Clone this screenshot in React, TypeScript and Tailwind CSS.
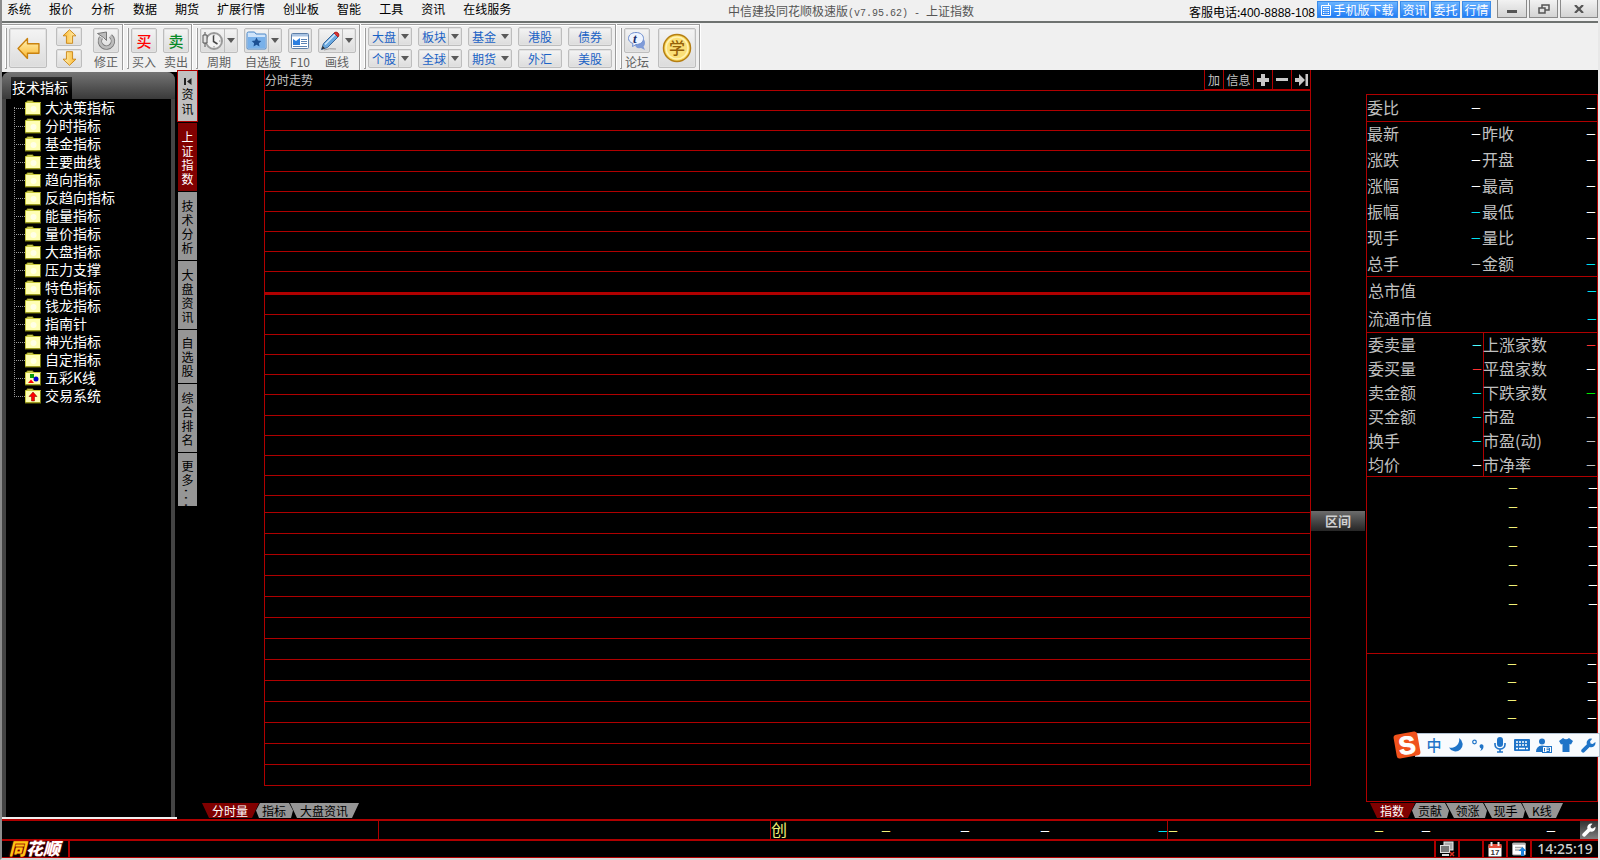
import React from 'react';
import clsx from 'clsx';

const menus = ['系统', '报价', '分析', '数据', '期货', '扩展行情', '创业板', '智能', '工具', '资讯', '在线服务'];

const indicators = [
  '大决策指标', '分时指标', '基金指标', '主要曲线', '趋向指标', '反趋向指标', '能量指标', '量价指标', '大盘指标',
  '压力支撑', '特色指标', '钱龙指标', '指南针', '神光指标', '自定指标', '五彩K线', '交易系统',
];

const sideTabs = ['上证指数', '技术分析', '大盘资讯', '自选股', '综合排名'];

const quotes = [
  ['最新', 'text-white', '昨收', 'text-white'],
  ['涨跌', 'text-white', '开盘', 'text-white'],
  ['涨幅', 'text-white', '最高', 'text-white'],
  ['振幅', 'text-[#00e0f0]', '最低', 'text-white'],
  ['现手', 'text-[#00e0f0]', '量比', 'text-white'],
  ['总手', 'text-[#c0c0c0]', '金额', 'text-[#00e0f0]'],
];

const stats = [
  ['委卖量', 'text-[#50ffff]', '上涨家数', 'text-[#ff3232]'],
  ['委买量', 'text-[#ff3232]', '平盘家数', 'text-white'],
  ['卖金额', 'text-[#00e0f0]', '下跌家数', 'text-[#00e600]'],
  ['买金额', 'text-[#00e0f0]', '市盈', 'text-[#c0c0c0]'],
  ['换手', 'text-[#00e0f0]', '市盈(动)', 'text-[#c0c0c0]'],
  ['均价', 'text-white', '市净率', 'text-[#c0c0c0]'],
];

const face = 'border border-[#bdbdbd] rounded-[2px] bg-gradient-to-b from-[#f4f4f4] to-[#dcdcdc] shadow-[inset_0_0_0_1px_#e2e2e2]';

const Dash = ({ className = '' }: { className?: string }) => (
  <span className={clsx("font-['Liberation_Sans'] text-[15px] leading-[16px] text-right", className)}>–</span>
);

const Caret = () => (
  <svg width="8" height="5" viewBox="0 0 8 5" fill="#5a5a5a"><path d="M0 0h8L4 5z" /></svg>
);

/* ---------- toolbar ---------- */

const Group = ({ children, className = 'pr-[2px]' }: { children: React.ReactNode; className?: string }) => (
  <div className={clsx('flex border-t border-r border-[#9c9c9c] pl-[3px] pt-[3px] mr-px shadow-[inset_0_1px_0_#fff,1px_0_0_#fff]', className)}>
    <div className="w-[2px] h-[41px] mr-[2px] border-r border-b border-[#9c9c9c] bg-white" />
    {children}
  </div>
);

const Tool = ({ label, drop, narrow, children }: { label: string; drop?: boolean; narrow?: boolean; children: React.ReactNode }) => (
  <div className={clsx('flex flex-col items-center text-[#606060]', drop ? 'w-[38px]' : narrow ? 'w-[24px]' : 'w-[26px]')}>
    <div className={clsx('flex w-full h-[25px]', face)}>
      <button aria-label={label} className="flex-1 flex items-center justify-center">{children}</button>
      {drop && (
        <button aria-label={label} className="w-[13px] flex items-center justify-center border-l border-[#bdbdbd]"><Caret /></button>
      )}
    </div>
    <span className="mt-[2px] text-[12px] leading-[14px] whitespace-nowrap">{label}</span>
  </div>
);

const SmallTool = ({ label, drop, split }: { label: string; drop?: boolean; split?: boolean }) => (
  <button className={clsx('w-[44px] h-[19px] flex items-center text-[12px] leading-[16px] text-[#1a62c5]', face, drop ? 'pl-[3px]' : 'justify-center')}>
    {label}
    {drop && (
      <span className={clsx('flex-1 h-full flex items-center justify-center ml-[2px]', split && 'border-l border-[#bdbdbd]')}><Caret /></span>
    )}
  </button>
);

const Arrow = ({ className, size }: { className: string; size: number }) => (
  <svg width={size} height={size} viewBox="0 0 22 22" className={className}>
    <defs>
      <linearGradient id="gold" x1="0" y1="0" x2="0" y2="1">
        <stop offset="0" stopColor="#fff3b8" />
        <stop offset="1" stopColor="#fbb62c" />
      </linearGradient>
    </defs>
    <path d="M1 11L10 1.5v5h11v9H10v5z" fill="url(#gold)" stroke="#c9820f" strokeWidth="1.3" strokeLinejoin="round" />
  </svg>
);

const ClockIcon = () => (
  <svg width="21" height="20" viewBox="0 0 21 20">
    <circle cx="12" cy="10" r="8" fill="#f3f3f3" stroke="#9a9a9a" strokeWidth="2" />
    <path d="M12 3.500v1.500M12 15v1.500M17 10h1.500" stroke="#888" />
    <path d="M11.500 4.500v6l4 2.500" fill="none" stroke="#444" strokeWidth="1.500" />
    <path d="M3 1v3m0 8v4M1 4h4v8H1z" fill="#e4e4e4" stroke="#555" />
  </svg>
);

const FavIcon = () => (
  <svg width="21" height="19" viewBox="0 0 21 19">
    <path d="M1 2.500q0-1.500 1.500-1.500h6l1.500 2h9q1 0 1 1v13q0 1-1 1H2q-1 0-1-1z" fill="#cfe4fa" stroke="#4a86c6" />
    <path d="M2 6h17v11H2z" fill="#79b1ea" />
    <path d="M10.500 6.500l1.500 3 3.300.4-2.400 2.300.6 3.200-3-1.600-3 1.600.6-3.200L5.700 9.900 9 9.500z" fill="#1c4f93" />
  </svg>
);

const F10Icon = () => (
  <svg width="18" height="16" viewBox="0 0 18 16">
    <rect x=".5" y=".5" width="17" height="15" rx="1" fill="#fff" stroke="#5d7fa8" />
    <path d="M1 1h16v2.500H1z" fill="#a9c3e2" />
    <path d="M2 6l3 2 4-3v7H2z" fill="#2d7fe0" />
    <path d="M10 6.500h6M10 8.500h6M10 10.500h6M2 13.500h14" stroke="#5d84b5" />
  </svg>
);

const PencilIcon = () => (
  <svg width="21" height="20" viewBox="0 0 21 20">
    <path d="M4 19q5-2 12-1" stroke="#999" fill="none" />
    <path d="M1.500 18.500l2-6L14 2l4 4L7.500 16.500z" fill="#6aa9e0" stroke="#3a6799" />
    <path d="M14 2q2-2 4 0t0 4z" fill="#d33" stroke="#a22" />
    <path d="M5 13.500L15 3.500" stroke="#d2e8fb" strokeWidth="1.500" />
    <path d="M1.500 18.500l1.200-3.500 2.300 2.300z" fill="#333" />
  </svg>
);

const RedoIcon = () => (
  <svg width="20" height="20" viewBox="0 0 20 20">
    <path d="M5 6.500a6.500 6.500 0 1 0 9.500-1.500" fill="none" stroke="#777" strokeWidth="4.500" />
    <path d="M5 6.500a6.500 6.500 0 1 0 9.500-1.500" fill="none" stroke="#bcbcbc" strokeWidth="2.800" />
    <path d="M1.500 2.500L10.500 1v8.500l-3-3z" fill="#bcbcbc" stroke="#777" />
  </svg>
);

const Toolbar = () => (
  <div className="flex h-[47px] pt-px bg-[#f0f0f0] shrink-0">
    <Group className="pr-[3px]">
      <button aria-label="后退" className={clsx('w-[38px] h-[40px] flex items-center justify-center', face)}><Arrow className="" size={23} /></button>
      <div className="flex flex-col gap-[3px] ml-[9px] mr-[11px] -mt-px">
        <button aria-label="上移" className={clsx('w-[26px] h-[19px] flex items-center justify-center', face)}><Arrow className="rotate-90" size={15} /></button>
        <button aria-label="下移" className={clsx('w-[26px] h-[19px] flex items-center justify-center', face)}><Arrow className="-rotate-90" size={15} /></button>
      </div>
      <Tool label="修正"><RedoIcon /></Tool>
    </Group>
    <Group>
      <div className="flex gap-[6px]">
        <Tool label="买入"><span className="text-[15px] leading-[20px] font-medium text-[#ff0000]">买</span></Tool>
        <Tool label="卖出"><span className="text-[15px] leading-[20px] font-medium text-[#078a28]">卖</span></Tool>
      </div>
    </Group>
    <Group className="pr-[3px]">
      <div className="flex gap-[6px]">
        <Tool label="周期" drop><ClockIcon /></Tool>
        <Tool label="自选股" drop><FavIcon /></Tool>
        <Tool label="F10" narrow><F10Icon /></Tool>
        <Tool label="画线" drop><PencilIcon /></Tool>
      </div>
    </Group>
    <Group className="pr-[3px]">
      <div className="grid grid-cols-5 gap-x-[6px] gap-y-[3px] -mt-px content-start">
        <SmallTool label="大盘" drop split />
        <SmallTool label="板块" drop split />
        <SmallTool label="基金" drop />
        <SmallTool label="港股" />
        <SmallTool label="债券" />
        <SmallTool label="个股" drop split />
        <SmallTool label="全球" drop split />
        <SmallTool label="期货" drop />
        <SmallTool label="外汇" />
        <SmallTool label="美股" />
      </div>
    </Group>
    <Group className="pr-[3px]">
      <Tool label="论坛">
        <svg width="20" height="20" viewBox="0 0 20 20">
          <path d="M12 8q6-1 6 4 0 2-1.500 3.500L18 19l-4-2q-6 1-6-4z" fill="#7f9bd8" />
          <path d="M9 1.500c4.500 0 7.500 2.500 7.500 6s-3 6-7.500 6l-3.500 2 .5-3C3 11.500 1.500 9.500 1.500 7.500c0-3.500 3-6 7.500-6z" fill="#eef4ff" stroke="#6d8dcf" />
          <text x="6" y="12" fontSize="13" fontWeight="bold" fontStyle="italic" fontFamily="Liberation Serif" fill="#1b2f6b">t</text>
        </svg>
      </Tool>
      <button aria-label="学" className={clsx('ml-[8px] w-[38px] h-[40px] flex items-center justify-center', face)}>
        <svg width="30" height="30" viewBox="0 0 30 30">
          <circle cx="15" cy="15" r="13.500" fill="#f8d658" stroke="#b57f14" strokeWidth="1.500" />
          <circle cx="15" cy="15" r="11" fill="#fbe078" stroke="#fff3b4" strokeWidth="1.500" />
          <text x="15" y="21" textAnchor="middle" fontSize="16" fontWeight="500" fill="#94610a">学</text>
        </svg>
      </button>
    </Group>
  </div>
);

/* ---------- title bar ---------- */

const blueBtn = 'h-[17px] border border-[#3b8be8] bg-gradient-to-b from-[#6ab4ff] to-[#1f7cf5] text-white text-[12px] leading-[15px] flex items-center justify-center whitespace-nowrap';
const winBtn = 'h-[18px] border border-t-0 border-[#8a8a8a] bg-gradient-to-b from-[#f2f2f2] to-[#d4d4d4] flex items-center justify-center';

const TitleBar = () => (
  <header className="relative flex justify-between h-[23px] shrink-0 bg-[#f0f0f0] border-b-2 border-[#6e7270] text-[12px] leading-[18px] text-black">
    <nav className="flex gap-[18px] pl-[5px]">
      {menus.map((m) => <button key={m} className="h-[18px]">{m}</button>)}
    </nav>
    <div className="absolute left-[726px] top-[2px] text-[#555] whitespace-nowrap">
      中信建投同花顺极速版<span className="font-['Liberation_Mono'] text-[10px]">(v7.95.62) - </span>上证指数
    </div>
    <div className="flex items-start">
      <span className="pt-[3px] mr-[2px]">客服电话:<span className="font-['Liberation_Sans'] text-[12px]">400-8888-108</span></span>
      <div className="flex gap-[2px] pt-px">
        <button className={clsx('w-[81px]', blueBtn)}>
          <svg width="10" height="13" viewBox="0 0 10 13" className="mr-[2px]">
            <path d="M.5 2.500h9v10h-9zM7.500 0v2" fill="none" stroke="#fff" />
            <path d="M2 4.500h6M2 6.500h1.500m1 0h1m1 0H8M2 8.500h1.500m1 0h1m1 0H8M2 10.500h1.500m1 0h1m1 0H8" stroke="#fff" />
          </svg>
          手机版下载
        </button>
        <button className={clsx('w-[29px]', blueBtn)}>资讯</button>
        <button className={clsx('w-[29px]', blueBtn)}>委托</button>
        <button className={clsx('w-[29px]', blueBtn)}>行情</button>
      </div>
      <div className="flex gap-[2px] ml-[6px]">
        <button aria-label="最小化" className={clsx('w-[30px]', winBtn)}><svg width="10" height="8"><path d="M0 5h10v3H0z" fill="#555" /></svg></button>
        <button aria-label="还原" className={clsx('w-[29px]', winBtn)}>
          <svg width="12" height="10" viewBox="0 0 12 10" fill="none" stroke="#555" strokeWidth="1.500"><path d="M1 4h6v5H1zM4 4V1h7v5H7.500" /></svg>
        </button>
        <button aria-label="关闭" className={clsx('w-[38px]', winBtn)}>
          <svg width="10" height="8" viewBox="0 0 10 8"><path d="M1 0l8 8M9 0L1 8" stroke="#555" strokeWidth="2.200" /></svg>
        </button>
      </div>
    </div>
  </header>
);

/* ---------- left side ---------- */

const Folder = ({ name }: { name: string }) => (
  <svg width="16" height="16" viewBox="0 0 16 16">
    <path d="M2 3V1h6v2" fill="#ffffa0" stroke="#8a8a10" />
    <path d="M.5 2.500h15v12H.5z" fill="#ffffb4" stroke="#c8c83c" />
    <path d="M0 15h16M15.500 3v12" stroke="#77770c" />
    {name === '五彩K线' && (
      <>
        <path d="M5 4h4v4H5z" fill="#0a9a0a" />
        <circle cx="11" cy="9" r="2.500" fill="#0000d0" />
        <path d="M3 13l3-3.500L9 13z" fill="#f00" />
      </>
    )}
    {name === '交易系统' && <path d="M8 4l4 4.500h-2.500V13h-3V8.500H4z" fill="#f00" stroke="#700" strokeWidth=".5" />}
    {name !== '五彩K线' && name !== '交易系统' && <circle cx="8.500" cy="9" r="3" fill="#ffffe6" />}
  </svg>
);

const Sidebar = () => (
  <aside className="w-[175px] shrink-0 flex flex-col border-t-2 border-b-2 border-[#f0f0f0]">
    <div className="flex-1 mr-[2px] flex flex-col rounded-t-[8px] bg-[#444] overflow-hidden">
      <div className="h-[27px] pt-[5px] pl-[9px] bg-gradient-to-b from-[#757575] to-[#3a3a3a]">
        <h2 className="w-[61px] h-[22px] pl-px bg-gradient-to-b from-[#2c2c2c] to-black text-white text-[14px] leading-[20px] whitespace-nowrap">技术指标</h2>
      </div>
      <div className="flex-1 mx-[4px] bg-black">
        <ul className="relative pl-[8px]">
          <li aria-hidden className="absolute left-[8px] top-[8px] bottom-[8px] border-l border-dotted border-[#999]" />
          {indicators.map((name) => (
            <li key={name} className="flex items-center h-[18px] text-white text-[14px] leading-[16px]">
              <span className="w-[11px] border-t border-dotted border-[#999]" />
              <Folder name={name} />
              <span className="ml-[4px] pb-[2px]">{name}</span>
            </li>
          ))}
        </ul>
      </div>
    </div>
  </aside>
);

const SideTabs = () => (
  <nav className="w-[21px] shrink-0 flex flex-col gap-px items-center text-[12px] leading-[14px] text-black">
    <button className="w-full h-[52px] flex flex-col items-center bg-[#c0c0c0] border border-[#b00000] leading-[15px]">
      <svg width="8" height="7" viewBox="0 0 8 7" className="mt-[7px] mb-px"><path d="M0 0h2v7H0zM7.500 0v7L3 3.500z" fill="#222" /></svg>
      <span className="w-[12px] break-all">资讯</span>
    </button>
    {sideTabs.map((t, i) => (
      <button key={t} className={clsx('w-[19px] flex justify-center items-center pt-px', t.length === 3 ? 'h-[53px]' : 'h-[68px]', i === 0 ? 'bg-[#800000] text-white' : 'bg-[#969696]')}>
        <span className="w-[12px] break-all">{t}</span>
      </button>
    ))}
    <button className="w-[19px] h-[53px] bg-[#969696] flex flex-col items-center pt-[6px]">
      <span className="w-[12px] break-all">更多</span>
      <span className="w-[14px] h-[24px] leading-[14px] text-[12px] font-['Liberation_Mono'] [writing-mode:vertical-rl]">...</span>
    </button>
  </nav>
);

/* ---------- chart ---------- */

const headBtn = 'h-[20px] border-l border-b border-[#b00000] flex items-center justify-center';

const Chart = () => (
  <div className="flex-1 ml-[66px] flex flex-col border-x border-[#b00000]">
    <div className="flex justify-between h-[20px] text-[12px] leading-[20px] text-[#c0c0c0]">
      <h1>分时走势</h1>
      <div className="flex">
        <button className={clsx('w-[19px]', headBtn)}>加</button>
        <button className={clsx('w-[30px]', headBtn)}>信息</button>
        <button aria-label="放大" className={clsx('w-[19px]', headBtn)}><svg width="12" height="12"><path d="M4 0h4v4h4v4H8v4H4V8H0V4h4z" fill="#c8c8c8" /></svg></button>
        <button aria-label="缩小" className={clsx('w-[19px]', headBtn)}><svg width="12" height="3"><path d="M0 0h12v3H0z" fill="#c8c8c8" /></svg></button>
        <button aria-label="最右" className={clsx('w-[19px]', headBtn)}><svg width="13" height="12"><path d="M0 4h4V0l6 6-6 6V8H0zM10.500 0H13v12h-2.500z" fill="#c8c8c8" /></svg></button>
      </div>
    </div>
    <div className="h-[405px] flex flex-col">
      {Array.from({ length: 20 }, (_, i) => (
        <div key={i} className={clsx('flex-1 border-[#b00000]', i === 10 ? 'border-t-[3px]' : 'border-t')} />
      ))}
    </div>
    <div className="h-[17px] border-t border-[#b00000]" />
    <div className="flex-1 flex flex-col border-b border-[#b00000]">
      {Array.from({ length: 13 }, (_, i) => <div key={i} className="flex-1 border-t border-[#b00000]" />)}
    </div>
  </div>
);

const shapes = {
  trap: '[clip-path:polygon(0_0,100%_0,calc(100%-7px)_100%,7px_100%)]',
  hex: '[clip-path:polygon(4px_0,calc(100%-4px)_0,100%_50%,calc(100%-2px)_100%,3px_100%,0_50%)]',
  mid: '[clip-path:polygon(0_0,calc(100%-4px)_0,100%_50%,calc(100%-2px)_100%,8px_100%)]',
};

const BottomTab = ({ label, shape, active, className }: { label: string; shape: keyof typeof shapes; active?: boolean; className: string }) => (
  <button className={clsx('h-[15px] pr-px text-[12px] leading-[15px] whitespace-nowrap', shapes[shape], active ? 'bg-[#800000] text-white' : 'bg-[#969696] text-black', className)}>
    {label}
  </button>
);

/* ---------- right side ---------- */

const PairRow = ({ row, className }: { row: string[]; className: string }) => (
  <div className={clsx('flex', className)}>
    <dt className="w-[75px] whitespace-nowrap">{row[0]}</dt>
    <dd className={clsx('w-[40px] flex justify-end items-center pr-[2px]', row[1])}><Dash /></dd>
    <dt className="flex-1 whitespace-nowrap">{row[2]}</dt>
    <dd className={clsx('flex items-center pr-[2px]', row[3])}><Dash /></dd>
  </div>
);

const DashRow = ({ className }: { className: string }) => (
  <li className={clsx('flex items-center justify-end', className)}>
    <Dash className="text-[#f0f078]" />
    <Dash className="w-[80px] text-white" />
  </li>
);

const QuotePanel = () => (
  <aside className="w-[232px] shrink-0 flex flex-col pt-[24px] pb-px">
    <div className="flex-1 flex flex-col border border-[#b00000] text-[16px] text-[#c0c0c0]">
      <dl className="border-b border-[#b00000]">
        <PairRow row={['委比', 'text-white', '', 'text-white']} className="h-[26px] pb-[2px] leading-[24px]" />
      </dl>
      <dl className="h-[155px] border-b border-[#b00000]">
        {quotes.map((r) => <PairRow key={r[0]} row={r} className="h-[26px] pb-[4px] leading-[22px]" />)}
      </dl>
      <dl className="h-[56px] border-b border-[#b00000] pl-px">
        {['总市值', '流通市值'].map((n) => (
          <div key={n} className="flex justify-between h-[28px] pb-[2px] leading-[26px]">
            <dt>{n}</dt>
            <dd className="flex items-center pr-px text-[#00e0f0]"><Dash /></dd>
          </div>
        ))}
      </dl>
      <dl className="h-[144px] border-b border-[#b00000] pl-px bg-[linear-gradient(#b00000,#b00000)] bg-[length:1px_100%] bg-[position:116px_0] bg-no-repeat">
        {stats.map((r) => <PairRow key={r[0]} row={r} className="h-[24px] pb-[2px] leading-[22px]" />)}
      </dl>
      <ul className="h-[177px] pb-[40px] border-b border-[#b00000] flex flex-col">
        {[0, 1, 2, 3, 4, 5, 6].map((i) => <DashRow key={i} className="flex-1" />)}
      </ul>
      <ul className="pr-px">
        {[0, 1, 2, 3].map((i) => <DashRow key={i} className="h-[18px]" />)}
      </ul>
    </div>
    <nav className="flex pl-[4px] mt-px">
      <BottomTab label="指数" shape="trap" active className="w-[45px]" />
      <BottomTab label="贡献" shape="hex" className="w-[37px] -ml-[3px]" />
      <BottomTab label="领涨" shape="mid" className="w-[41px] -ml-[3px] pl-[3px]" />
      <BottomTab label="现手" shape="mid" className="w-[41px] -ml-[3px] pl-[3px]" />
      <BottomTab label="K线" shape="trap" className="w-[41px] -ml-[3px]" />
    </nav>
  </aside>
);

const Wrench = ({ size, color }: { size: number; color: string }) => (
  <svg width={size} height={size} viewBox="0 0 16 16">
    <path d="M15.300 4.200l-2.800 2.200-2.300-.6-.5-2.300L12 .8A4.600 4.600 0 0 0 6.300 6.700L.9 12.100a2 2 0 0 0 2.900 2.900l5.400-5.400a4.600 4.600 0 0 0 6.100-5.400z" fill={color} />
  </svg>
);

const imeBtn = 'w-[22px] flex items-center justify-center';

const ImeBar = () => (
  <div className="absolute right-0 top-[731px] flex items-center">
    <svg width="28" height="28" viewBox="0 0 28 28" className="z-10 -mr-[6px]">
      <rect x="2" y="2" width="24" height="24" rx="3" fill="#f0521c" transform="rotate(-10 14 14)" />
      <text x="14" y="23" textAnchor="middle" fontSize="25" fontWeight="bold" fontFamily="Liberation Sans" fill="#fff" stroke="#fff" transform="rotate(-8 14 14)">S</text>
    </svg>
    <div className="flex items-center w-[185px] h-[24px] pl-[7px] bg-[#f8fbfe] border border-[#b4c3d2] text-[#1f74c8]">
      <button className={clsx('text-[15px] leading-[20px] font-medium', imeBtn)}>中</button>
      <button aria-label="半角" className={imeBtn}><svg width="14" height="14"><path d="M10 0A8 8 0 0 1 0 9.500 7.200 7.200 0 1 0 10 0z" fill="#1f74c8" /></svg></button>
      <button aria-label="标点" className={imeBtn}><svg width="12" height="12"><circle cx="2.500" cy="3" r="1.800" fill="none" stroke="#1f74c8" strokeWidth="1.200" /><path d="M7.500 7a2 2 0 1 1 4 .5q0 3-3.500 4.500 1.300-1.500 1.300-2.500-1.600-.3-1.800-2.500z" fill="#1f74c8" /></svg></button>
      <button aria-label="语音" className={imeBtn}>
        <svg width="12" height="16"><rect x="3" y="0" width="6" height="10" rx="3" fill="#1f74c8" /><path d="M1 6v1.500a5 4.500 0 0 0 10 0V6M6 12v3M3 15h6" fill="none" stroke="#1f74c8" strokeWidth="1.600" /></svg>
      </button>
      <button aria-label="软键盘" className={imeBtn}>
        <svg width="16" height="12"><rect width="16" height="12" rx="1" fill="#1f74c8" /><path d="M2 3h12M2 6h12" stroke="#fff" strokeWidth="1.500" strokeDasharray="2 1" /><path d="M2 9.500h2m1 0h6m1 0h2" stroke="#fff" strokeWidth="1.500" /></svg>
      </button>
      <button aria-label="登录" className={imeBtn}>
        <svg width="16" height="15"><circle cx="6" cy="3.500" r="3" fill="#1f74c8" /><path d="M0 14q0-6 6-6.500 4 0 5 2v4.500z" fill="#1f74c8" /><rect x="6.500" y="8.500" width="9" height="6" fill="#fff" stroke="#1f74c8" /><path d="M8.500 10v3.500M10.500 10h3v3.500h-3M10.500 11.700h3" fill="none" stroke="#1f74c8" /></svg>
      </button>
      <button aria-label="皮肤" className={imeBtn}><svg width="14" height="14"><path d="M4 0q3 2.500 6 0l4 3-2 3.500-1.500-.5v8h-7V6L2 6.500 0 3z" fill="#1f74c8" /></svg></button>
      <button aria-label="设置" className={imeBtn}><Wrench size={15} color="#1f74c8" /></button>
    </div>
  </div>
);

/* ---------- status bar ---------- */

const StatusBar = () => (
  <footer className="shrink-0 border-t-2 border-[#b00000]">
    <div className="flex h-[18px] items-stretch">
      <div className="w-[377px] border-r border-[#b00000]" />
      <div className="w-[392px] border-r border-[#b00000]" />
      <div className="w-[397px] flex items-center border-r border-[#b00000]">
        <span className="w-[16px] text-[16px] leading-[16px] pb-[2px] text-[#f0f078]">创</span>
        <Dash className="w-[103px] text-[#f0f078]" />
        <Dash className="w-[79px] text-white" />
        <Dash className="w-[80px] text-white" />
        <Dash className="flex-1 text-[#00e0f0]" />
      </div>
      <div className="flex-1 flex items-center">
        <Dash className="w-[9px] text-[#f0f078]" />
        <Dash className="w-[206px] text-[#f0f078]" />
        <Dash className="w-[47px] text-white" />
        <Dash className="w-[125px] text-white" />
      </div>
      <button aria-label="设置" className="w-[18px] flex items-center justify-center bg-gradient-to-b from-[#333] to-[#808080]"><Wrench size={14} color="#fff" /></button>
    </div>
    <div className="flex h-[19px] border-t-2 border-b border-[#b00000]">
      <div className="w-[68px] pl-[7px] border-r-2 border-[#b00000] text-[17px] leading-[14px] font-black italic whitespace-nowrap text-white [text-shadow:0_0_2px_#e00000]">
        <span className="text-[#ffc414]">同</span>花顺
      </div>
      <div className="flex-1" />
      <button aria-label="网络" className="w-[26px] border-l-2 border-r-2 border-[#b00000] flex items-center justify-center">
        <svg width="16" height="16"><rect x="5" y="1" width="9" height="8" fill="#aaa" stroke="#eee" /><rect x="1.500" y="4.500" width="9" height="7" fill="#777" stroke="#ddd" /><path d="M3 14h7" stroke="#ddd" strokeWidth="2" /><path d="M11 11l4 4m0-4l-4 4" stroke="#e0301e" strokeWidth="1.500" /></svg>
      </button>
      <div className="w-[22px]" />
      <button aria-label="日历" className="w-[26px] border-l-2 border-r-2 border-[#b00000] flex items-center justify-center">
        <svg width="14" height="15"><path d="M.5 3.500h13v11H.5z" fill="#fff" /><path d="M.5 2h13v4H.5z" fill="#e8503c" /><path d="M3.500 0v4M10.500 0v4" stroke="#eee" strokeWidth="2" /><text x="7" y="13" textAnchor="middle" fontSize="8" fontWeight="bold" fontFamily="Liberation Sans" fill="#333">17</text></svg>
      </button>
      <button aria-label="上传" className="w-[24px] border-r-2 border-[#b00000] flex items-center justify-center">
        <svg width="15" height="14"><rect x=".5" y="1" width="13" height="12" rx="1" fill="#fff" stroke="#999" /><path d="M1 2h12M3 5.500h8M3 8h6" stroke="#aaa" strokeWidth="1.500" /><path d="M10.500 5l4 4h-2.500v5h-3V9H6.500z" fill="#1d84dd" /></svg>
      </button>
      <time className="w-[66px] text-center font-['Noto_Sans'] text-[14px] leading-[16px] font-medium text-[#d0d0d0]">14:25:19</time>
    </div>
  </footer>
);

const App = () => (
  <div className="relative font-['Noto_Sans_CJK_SC',sans-serif]">
    <div className="h-screen flex flex-col overflow-hidden bg-black border-l-2 border-r-2 border-b-2 border-l-[#8c8c8c] border-r-[#e8e8e8] border-b-[#d8d8d8]">
      <TitleBar />
      <Toolbar />
      <main className="flex-1 flex min-h-0">
        <Sidebar />
        <SideTabs />
        <section className="flex-1 flex flex-col pb-px">
          <div className="flex-1 flex mb-[17px]">
            <Chart />
            <div className="w-[55px] flex flex-col">
              <div className="flex-[441]" />
              <button className="w-[54px] h-[20px] bg-gradient-to-b from-[#6c6c6c] to-[#262626] text-[13px] leading-[18px] font-bold text-[#d0d0d0]">区间</button>
              <div className="flex-[255]" />
            </div>
          </div>
          <nav className="flex pl-[4px]">
            <BottomTab label="分时量" shape="trap" active className="w-[57px]" />
            <BottomTab label="指标" shape="hex" className="w-[37px] -ml-[3px]" />
            <BottomTab label="大盘资讯" shape="trap" className="w-[69px] -ml-[3px]" />
          </nav>
        </section>
        <QuotePanel />
      </main>
      <StatusBar />
    </div>
    <ImeBar />
  </div>
);

export default App;
